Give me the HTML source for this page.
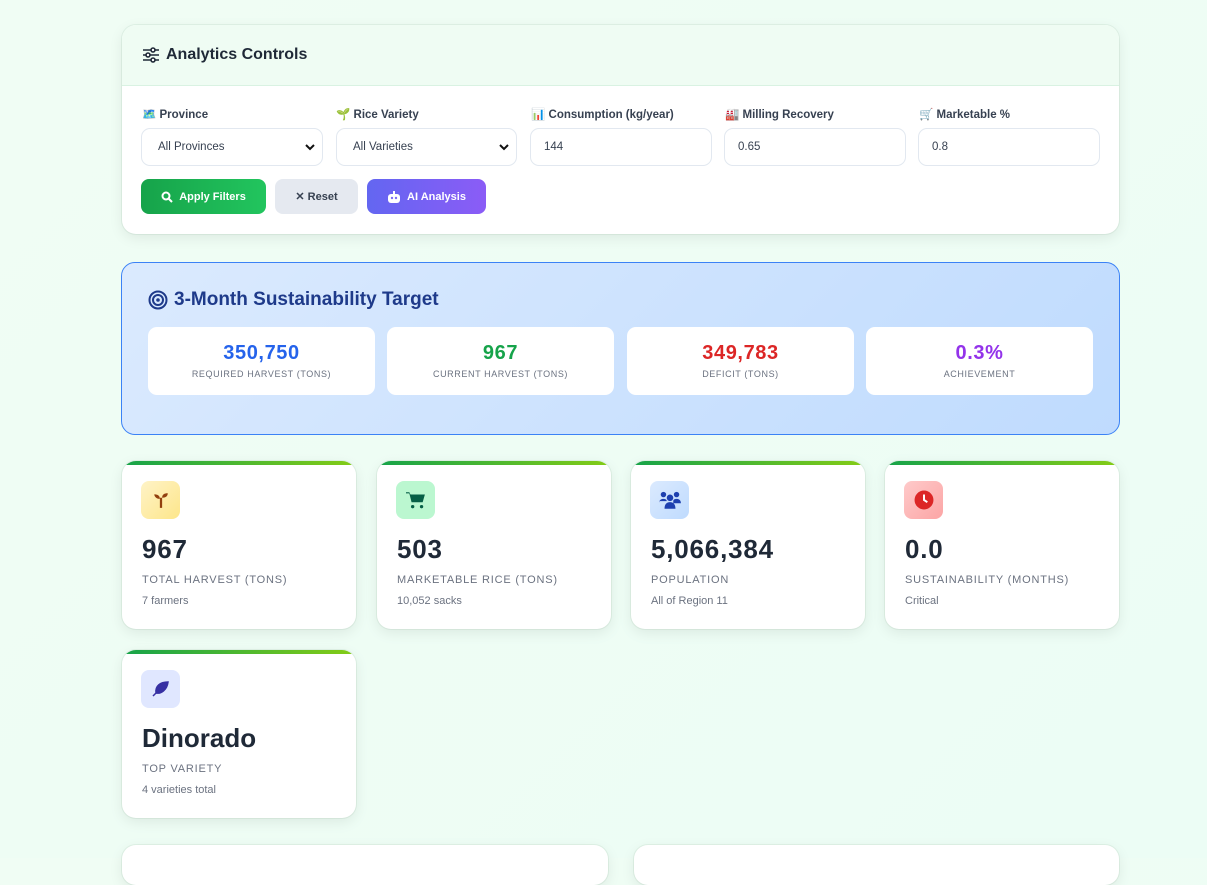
<!DOCTYPE html>
<html><head><meta charset="utf-8"><style>
*{box-sizing:border-box;margin:0;padding:0}
body{width:1207px;height:858px;overflow:hidden;font-family:"Liberation Sans","Noto Sans CJK SC",sans-serif;background:linear-gradient(135deg,#f0fdf4,#ecfdf5);color:#1f2937;position:relative}
.card{position:absolute;background:#fff;border-radius:14px;box-shadow:0 4px 14px rgba(0,0,0,.08),0 0 0 1px rgba(220,240,228,.8)}
.ctrl{left:122px;top:25px;width:997px;height:209px;overflow:hidden}
.ctrl .hd{height:61px;background:#effcf3;border-bottom:1px solid #d9f2e2;display:flex;align-items:center;padding-left:20px;font-weight:bold;font-size:16px;color:#1f2937}
.lbl{position:absolute;top:82px;font-size:11.5px;font-weight:bold;color:#374151}
.inp{position:absolute;top:103px;width:182px;height:38px;border:1px solid #e2e8f0;border-radius:9px;font-size:11.5px;color:#374151;padding:0 0 0 16px;display:flex;align-items:center}
.inp.txt{padding-left:13px;top:103px}
.chev{position:absolute;right:6px;top:12px}
.btn{position:absolute;top:154px;height:35px;border-radius:8px;font-size:11px;font-weight:bold;display:flex;align-items:center;justify-content:center;gap:6px}
.tgt{position:absolute;left:121px;top:262px;width:999px;height:173px;border:1px solid #3b82f6;border-radius:14px;background:linear-gradient(135deg,#dbeafe,#bfdbfe)}
.tgt h2{position:absolute;left:26px;top:26px;font-size:19px;color:#1e3a8a;display:flex;align-items:center;gap:6px}
.tc{position:absolute;top:64px;width:227px;height:68px;background:#fff;border-radius:9px;text-align:center}
.tc b{display:block;font-size:20px;margin-top:15px;letter-spacing:.6px}
.tc span{display:block;font-size:9px;color:#6b7280;letter-spacing:.6px;margin-top:4px}
.st{width:234px;height:168px;overflow:hidden}
.st:before{content:"";position:absolute;left:0;top:0;right:0;height:4px;background:linear-gradient(90deg,#16a34a,#84cc16)}
.ic{position:absolute;left:19px;top:20px;width:39px;height:38px;border-radius:8px;display:flex;align-items:center;justify-content:center}
.st .v{position:absolute;left:20px;top:73px;font-size:26px;font-weight:bold;color:#1f2937;letter-spacing:.8px}
.st .l{position:absolute;left:20px;top:113px;font-size:11px;color:#6b7280;letter-spacing:.8px}
.st .s{position:absolute;left:20px;top:134px;font-size:11px;color:#6b7280}
</style></head><body>
<div class="card ctrl">
 <div class="hd"><svg width="18" height="16" viewBox="0 0 18 16" style="margin-right:6px"><g stroke="#1f2937" stroke-width="1.6" fill="none"><path d="M1 3h16M1 8h16M1 13h16"/><circle cx="11" cy="3" r="2" fill="#fff"/><circle cx="6" cy="8" r="2" fill="#fff"/><circle cx="11" cy="13" r="2" fill="#fff"/></g></svg>Analytics Controls</div>
 <div class="lbl" style="left:20px">🗺️ Province</div>
 <div class="lbl" style="left:214px">🌱 Rice Variety</div>
 <div class="lbl" style="left:409px">📊 Consumption (kg/year)</div>
 <div class="lbl" style="left:603px">🏭 Milling Recovery</div>
 <div class="lbl" style="left:797px">🛒 Marketable %</div>
 <div class="inp" style="left:19px;width:182px">All Provinces<svg class="chev" width="12" height="12" viewBox="0 0 12 12"><path d="M2 4l4 4 4-4" stroke="#111" stroke-width="2" fill="none"/></svg></div>
 <div class="inp" style="left:214px;width:181px">All Varieties<svg class="chev" width="12" height="12" viewBox="0 0 12 12"><path d="M2 4l4 4 4-4" stroke="#111" stroke-width="2" fill="none"/></svg></div>
 <div class="inp txt" style="left:408px">144</div>
 <div class="inp txt" style="left:602px">0.65</div>
 <div class="inp txt" style="left:796px">0.8</div>
 <div class="btn" style="left:19px;width:125px;background:linear-gradient(90deg,#16a34a,#22c55e);color:#fff"><svg width="12" height="12" viewBox="0 0 12 12"><circle cx="5" cy="5" r="3.5" stroke="#fff" stroke-width="2" fill="none"/><path d="M7.5 7.5L11 11" stroke="#fff" stroke-width="2"/></svg>Apply Filters</div>
 <div class="btn" style="left:153px;width:83px;background:#e5e9f0;color:#374151">✕ Reset</div>
 <div class="btn" style="left:245px;width:119px;background:linear-gradient(90deg,#6366f1,#8b5cf6);color:#fff"><svg width="14" height="12" viewBox="0 0 14 12"><rect x="1" y="3" width="12" height="9" rx="3" fill="#fff"/><rect x="6" y="0" width="2" height="3" fill="#fff"/><circle cx="5" cy="7" r="1.2" fill="#7c6cf4"/><circle cx="9" cy="7" r="1.2" fill="#7c6cf4"/></svg>AI Analysis</div>
</div>
<div class="tgt">
 <h2><svg width="20" height="20" viewBox="0 0 20 20"><g fill="none" stroke="#1e3a8a" stroke-width="2"><circle cx="10" cy="10" r="8.5"/><circle cx="10" cy="10" r="5"/></g><circle cx="10" cy="10" r="1.8" fill="#1e3a8a"/></svg>3-Month Sustainability Target</h2>
 <div class="tc" style="left:26px"><b style="color:#2563eb">350,750</b><span>REQUIRED HARVEST (TONS)</span></div>
 <div class="tc" style="left:265px"><b style="color:#16a34a">967</b><span>CURRENT HARVEST (TONS)</span></div>
 <div class="tc" style="left:505px"><b style="color:#dc2626">349,783</b><span>DEFICIT (TONS)</span></div>
 <div class="tc" style="left:744px"><b style="color:#9333ea">0.3%</b><span>ACHIEVEMENT</span></div>
</div>
<div class="card st" style="left:122px;top:461px"><div class="ic" style="background:linear-gradient(135deg,#fef3c7,#fde68a)"><svg width="18" height="18" viewBox="0 0 16 16" fill="#92400e"><path d="M7 7C3 7 2 4 2 3c3 0 5 1 5 4zM9 6c0-3 2-4 5-4 0 2-1 4-5 4z"/><rect x="7" y="6" width="2" height="9"/></svg></div><div class="v">967</div><div class="l">TOTAL HARVEST (TONS)</div><div class="s">7 farmers</div></div>
<div class="card st" style="left:377px;top:461px"><div class="ic" style="background:#bbf7d0"><svg width="20" height="18" viewBox="0 0 18 16" fill="#065f46"><path d="M0 1h3l1 2h13l-2 7H5L3 2H0z"/><circle cx="6" cy="14" r="1.5"/><circle cx="14" cy="14" r="1.5"/></svg></div><div class="v">503</div><div class="l">MARKETABLE RICE (TONS)</div><div class="s">10,052 sacks</div></div>
<div class="card st" style="left:631px;top:461px"><div class="ic" style="background:linear-gradient(135deg,#dbeafe,#bfdbfe)"><svg width="24" height="18" viewBox="0 0 22 16" fill="#1e40af"><circle cx="5" cy="3" r="2.5"/><circle cx="17" cy="3" r="2.5"/><circle cx="11" cy="6" r="3"/><path d="M1 11c0-3 2-4 4-4s3 1 3 2H1zM14 9c0-1 1-2 3-2s4 1 4 4h-7zM6 16c0-4 2-6 5-6s5 2 5 6z"/></svg></div><div class="v">5,066,384</div><div class="l">POPULATION</div><div class="s">All of Region 11</div></div>
<div class="card st" style="left:885px;top:461px"><div class="ic" style="background:linear-gradient(135deg,#fecaca,#fca5a5)"><svg width="20" height="20" viewBox="0 0 18 18"><circle cx="9" cy="9" r="8.5" fill="#dc2626"/><path d="M9 4v5l3 2" stroke="#fff" stroke-width="1.8" fill="none"/></svg></div><div class="v">0.0</div><div class="l">SUSTAINABILITY (MONTHS)</div><div class="s">Critical</div></div>
<div class="card st" style="left:122px;top:650px"><div class="ic" style="background:#e0e7ff"><svg width="18" height="16" viewBox="0 0 18 16" fill="#3730a3"><path d="M16 1C8 1 3 5 4 12c5 1 11-3 12-11zM1 15l7-7" stroke="#3730a3" stroke-width="1.5"/></svg></div><div class="v" style="letter-spacing:0">Dinorado</div><div class="l">TOP VARIETY</div><div class="s">4 varieties total</div></div>
<div class="card" style="left:122px;top:845px;width:486px;height:40px"></div>
<div class="card" style="left:634px;top:845px;width:485px;height:40px"></div>
</body></html>
